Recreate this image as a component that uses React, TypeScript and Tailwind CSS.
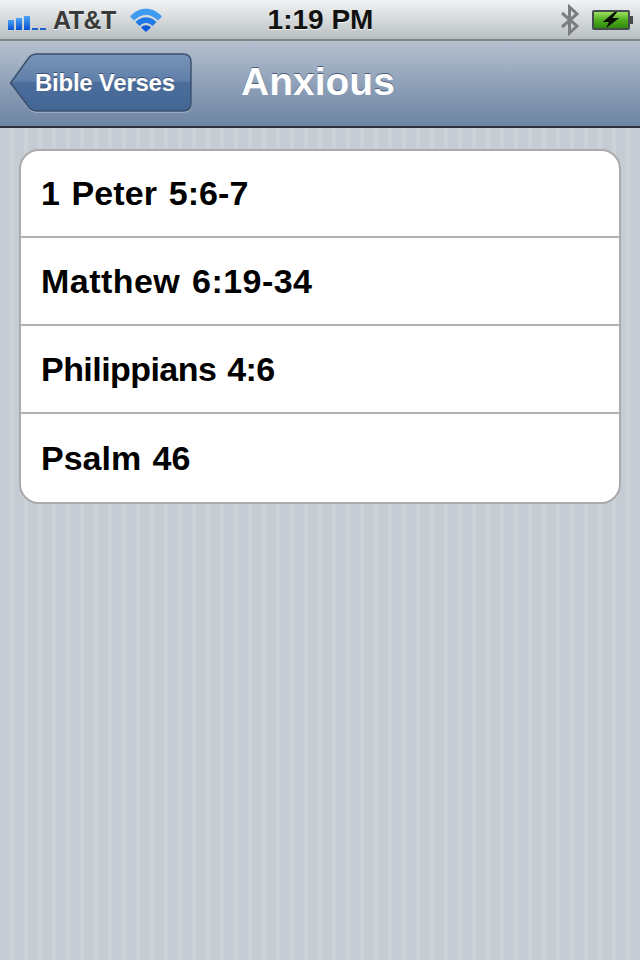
const verses = [
  { label: "1 Peter 5:6-7", row: "h-[85px] tracking-[0.1px]" },
  { label: "Matthew 6:19-34", row: "h-[88px] border-t-2 border-[#aeb0b2] tracking-[0.45px]" },
  { label: "Philippians 4:6", row: "h-[88px] border-t-2 border-[#aeb0b2] tracking-[-0.55px]" },
  { label: "Psalm 46", row: "h-[90px] border-t-2 border-[#aeb0b2] tracking-[0px]" },
];

function Signal() {
  return (
    <div className="mt-[7px] flex items-end gap-[2px]">
      <div className="h-[10px] w-[6px] bg-gradient-to-b from-[#4aa3f5] to-[#0a4fd0]" />
      <div className="h-[12px] w-[6px] bg-gradient-to-b from-[#4aa3f5] to-[#0a4fd0]" />
      <div className="h-[14px] w-[6px] bg-gradient-to-b from-[#4aa3f5] to-[#0a4fd0]" />
      <div className="h-[2px] w-[6px] bg-[#1a5fd0]" />
      <div className="h-[2px] w-[6px] bg-[#1a5fd0]" />
    </div>
  );
}

function Wifi() {
  return (
    <svg width="32" height="24" viewBox="0 0 32 24">
      <path d="M0 8.500C9 -2 23 -2 32 8.500L28 12.500C21 5 11 5 4 12.500Z" fill="#3f9bf0" />
      <path d="M5.500 14C11.500 7.500 20.500 7.500 26.500 14L22.500 18C18.500 14 13.500 14 9.500 18Z" fill="#1f7ae8" />
      <path d="M11 19.500C14 16.500 18 16.500 21 19.500L16 24Z" fill="#0a56d8" />
    </svg>
  );
}

function Bluetooth() {
  return (
    <svg className="mt-[1px]" width="20" height="32" viewBox="0 0 20 32">
      <path d="M2 9L17 22L9.500 29V3L17 10L2 23" fill="none" stroke="#7b7e80" strokeWidth="3" />
    </svg>
  );
}

function Battery() {
  return (
    <div className="flex items-center">
      <div className="flex h-[20px] w-[38px] items-center justify-center rounded-[2px] border-2 border-[#454b4e] bg-gradient-to-b from-[#9be060] via-[#4fae1c] to-[#2f8a0c]">
        <svg width="18" height="16" viewBox="0 0 26 16" preserveAspectRatio="none">
          <path d="M18 0L1 10H10L6 16L25 6H15L22 0Z" fill="#0a0f05" />
        </svg>
      </div>
      <div className="h-[8px] w-[3px] bg-[#454b4e]" />
    </div>
  );
}

function BackButton() {
  return (
    <div className="relative ml-[9px] h-[60px] w-[184px]">
      <svg className="absolute inset-0" width="184" height="60" viewBox="0 0 184 60">
        <defs>
          <linearGradient id="back" x1="0" y1="0" x2="0" y2="1">
            <stop offset="0" stopColor="#7a95b8" />
            <stop offset="0.5" stopColor="#5d7da8" />
            <stop offset="0.5" stopColor="#4a6d9c" />
            <stop offset="1" stopColor="#446695" />
          </linearGradient>
        </defs>
        <path
          d="M1.500 30L20 5.500Q23 2 28 2H174Q182 2 182 10V51Q182 59 174 59H28Q23 59 20 55.500Z"
          fill="none"
          stroke="#a9b8cc"
          strokeWidth="1.500"
        />
        <path
          d="M1.500 30L20 4.500Q23 1 28 1H174Q182 1 182 9V50Q182 58 174 58H28Q23 58 20 54.500Z"
          fill="url(#back)"
          stroke="#3a4f6e"
          strokeWidth="1.500"
        />
      </svg>
      <span className="absolute left-[26px] top-[15px] text-[24px] leading-[30px] font-bold tracking-[-0.25px] text-white [text-shadow:0_-1px_0_#3b4f6e]">
        Bible Verses
      </span>
    </div>
  );
}

export default function App() {
  return (
    <div className="flex h-[960px] w-[640px] flex-col overflow-hidden font-['Liberation_Sans',Arial,sans-serif]">
      <div className="flex h-[41px] items-center justify-between border-b-2 border-[#7f8489] bg-gradient-to-b from-[#f1f4f5] to-[#b9bfc1] pr-[7px] pl-[8px]">
        <div className="flex w-[200px] items-center">
          <Signal />
          <span className="ml-[7px] text-[25px] leading-[32px] font-bold tracking-[-0.5px] text-[#3a3a3a] [text-shadow:0_1px_0_#f2f4f4]">
            AT&amp;T
          </span>
          <div className="ml-[14px]">
            <Wifi />
          </div>
        </div>
        <span className="text-[28px] leading-[32px] font-bold text-[#111] [text-shadow:0_1px_0_#f2f4f4]">1:19 PM</span>
        <div className="flex w-[200px] items-center justify-end gap-[12px]">
          <Bluetooth />
          <Battery />
        </div>
      </div>
      <div className="flex h-[87px] items-center border-b-2 border-[#2d3239] bg-gradient-to-b from-[#b4c0ce] to-[#6d84a4] pb-[1px]">
        <BackButton />
        <span className="mb-[3px] ml-[48px] text-[39px] leading-[48px] font-bold text-white [text-shadow:0_-1px_0_#4a5d78]">
          Anxious
        </span>
      </div>
      <div className="flex-1 bg-[repeating-linear-gradient(90deg,#c5ccd4_0px,#c5ccd4_10px,#cbd2d8_10px,#cbd2d8_14px)] px-[19px] pt-[21px]">
        <div className="overflow-hidden rounded-[20px] border-2 border-[#a9abad] bg-white">
          {verses.map((v) => (
            <div
              key={v.label}
              className={`flex items-center pl-[20px] text-[34px] font-bold text-black [word-spacing:2px] ${v.row}`}
            >
              {v.label}
            </div>
          ))}
        </div>
      </div>
    </div>
  );
}
